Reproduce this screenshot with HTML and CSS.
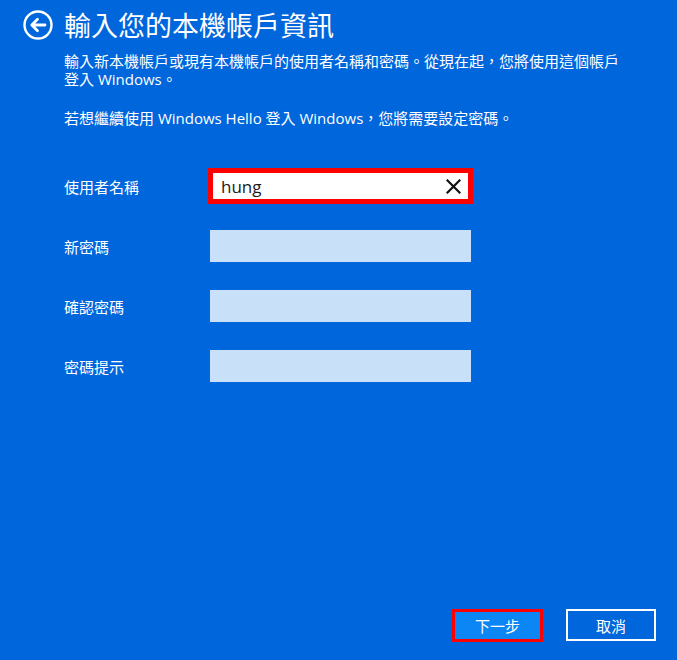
FILE: index.html
```html
<!DOCTYPE html>
<html lang="zh-Hant">
<head>
    <meta charset="UTF-8">
    <meta name="viewport" content="width=device-width, initial-scale=1.0">
    <title>輸入您的本機帳戶資訊</title>
    <link rel="stylesheet" href="styles.css">
</head>
<body>
    <div class="page">
        <div class="header">
            <button class="back-button" aria-label="返回">
                <svg width="30" height="30" viewBox="0 0 30 30">
                    <circle cx="15" cy="15" r="13.5" fill="none" stroke="#fff" stroke-width="2.4"/>
                    <path d="M22 15 H9 M14.5 9.3 L8.8 15 L14.5 20.7" fill="none" stroke="#fff" stroke-width="2.8" stroke-linecap="round" stroke-linejoin="round"/>
                </svg>
            </button>
            <h1>輸入您的本機帳戶資訊</h1>
        </div>
        <div class="content">
            <p>輸入新本機帳戶或現有本機帳戶的使用者名稱和密碼。從現在起，您將使用這個帳戶登入 Windows。</p>
            <p>若想繼續使用 Windows Hello 登入 Windows，您將需要設定密碼。</p>

            <div class="form">
                <div class="form-row">
                    <label>使用者名稱</label>
                    <div class="field field-active">
                        <span class="field-value">hung</span>
                        <svg class="clear-icon" width="15" height="15" viewBox="0 0 15 15">
                            <path d="M1.5 1.5 L13.5 13.5 M13.5 1.5 L1.5 13.5" stroke="#111" stroke-width="2.2" stroke-linecap="square"/>
                        </svg>
                    </div>
                </div>
                <div class="form-row">
                    <label>新密碼</label>
                    <div class="field"></div>
                </div>
                <div class="form-row">
                    <label>確認密碼</label>
                    <div class="field"></div>
                </div>
                <div class="form-row">
                    <label>密碼提示</label>
                    <div class="field"></div>
                </div>
            </div>
        </div>
        <div class="footer">
            <button class="btn btn-primary">下一步</button>
            <button class="btn btn-secondary">取消</button>
        </div>
    </div>
</body>
</html>
```

FILE: styles.css
```css
body {
    margin: 0;
    background-color: #0066dc;
    color: #fff;
    font-family: 'Open Sans', 'Noto Sans CJK TC', sans-serif;
}
.page {
    min-height: 660px;
    display: flex;
    flex-direction: column;
    box-sizing: border-box;
    padding-bottom: 18px;
}
.header {
    display: flex;
    align-items: center;
    padding: 10px 0 0 23px;
    height: 30px;
}
.back-button {
    background: none;
    border: none;
    padding: 0;
    width: 30px;
    height: 30px;
    margin-right: 11px;
    cursor: pointer;
}
.back-button svg {
    display: block;
}
h1 {
    margin: 0;
    font-size: 27px;
    font-weight: normal;
    line-height: 30px;
    font-family: 'Noto Sans CJK TC', sans-serif;
}
.content {
    padding-left: 64px;
    width: 560px;
}
p {
    margin: 12px 0 21px;
    font-size: 15px;
    line-height: 18px;
}
p + p {
    margin-top: 0;
}
.form {
    margin-top: 43px;
    display: flex;
    flex-direction: column;
    gap: 28px;
}
.form-row {
    display: flex;
    align-items: center;
    height: 32px;
}
.form-row label {
    width: 146px;
    font-size: 15px;
}
.field {
    width: 261px;
    height: 32px;
    background-color: #c8e1f8;
    box-sizing: border-box;
}
.field-active {
    background-color: #fff;
    border: 3px solid #ff0000;
    outline: 2px solid #ff0000;
    display: flex;
    align-items: center;
    justify-content: space-between;
    padding: 0 7px 0 8px;
}
.field-value {
    color: #1a1a1a;
    font-size: 17px;
}
.footer {
    margin-top: auto;
    display: flex;
    justify-content: flex-end;
    gap: 23px;
    padding-right: 21px;
}
.btn {
    font-family: 'Noto Sans CJK TC', sans-serif;
    font-size: 15px;
    color: #fff;
    cursor: pointer;
    box-sizing: border-box;
    height: 33px;
    padding: 0;
}
.btn-primary {
    width: 91px;
    background-color: #0c86f5;
    border: 3px solid #ff0000;
}
.btn-secondary {
    width: 90px;
    height: 32px;
    background-color: transparent;
    border: 2px solid #fff;
}
```
